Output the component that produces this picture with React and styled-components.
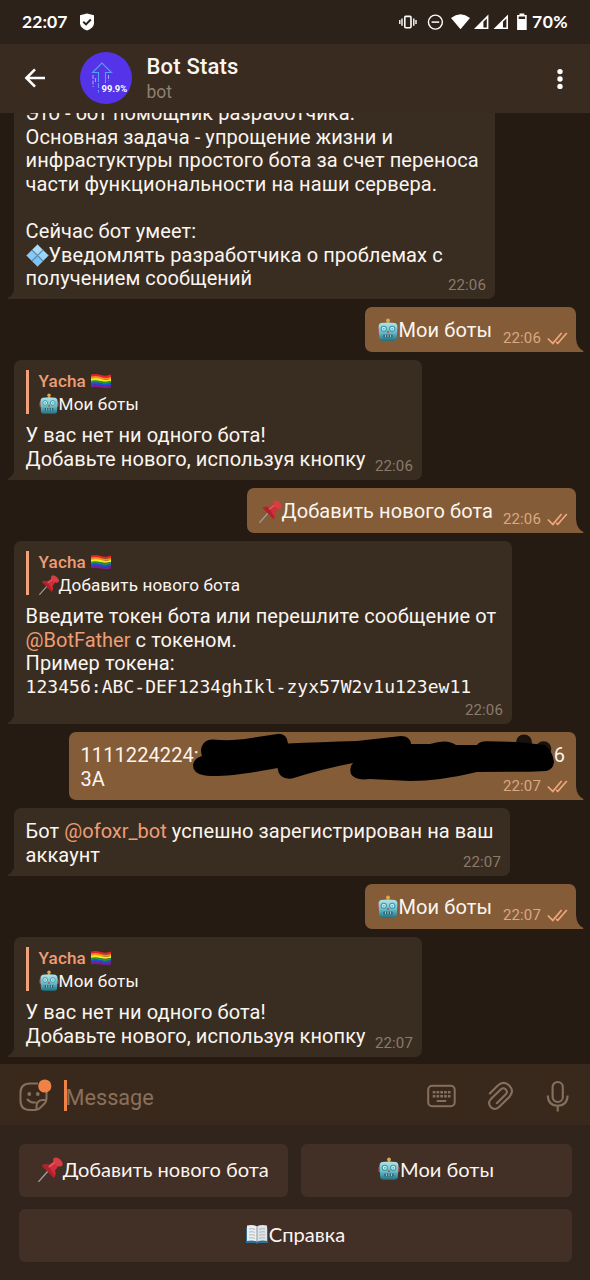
import React from "react";
import styled, { createGlobalStyle, css } from "styled-components";

const color = {
  status: "#2d2219",
  header: "#392b1f",
  chat: "#251b13",
  incoming: "#392d22",
  outgoing: "#845c37",
  composer: "#39291d",
  keyboard: "#31241c",
  key: "#422f25",
  text: "#fbf5f0",
  accent: "#ee9d75",
  muted: "#8b7a6b",
  icon: "#85705d",
  cursor: "#ef8247",
};

const GlobalStyle = createGlobalStyle`
  * { box-sizing: border-box; }
  body { margin: 0; background: ${color.chat}; }
`;

const Screen = styled.div`
  width: 590px;
  height: 1280px;
  display: flex;
  flex-direction: column;
  overflow: hidden;
  color: ${color.text};
  font-family: Roboto, "Liberation Sans", sans-serif;
`;

const StatusBar = styled.div`
  flex: 0 0 44px;
  display: flex;
  align-items: center;
  padding: 0 20px 0 22px;
  background: ${color.status};
  color: #fff;
  font: 700 17.5px/44px Lato, Roboto, sans-serif;
`;

const Clock = styled.span`
  width: 57px;
  letter-spacing: 0.1px;
`;

const StatusIcons = styled.div`
  margin-left: auto;
  display: flex;
  align-items: center;
`;

const Level = styled.span`
  width: 38px;
  margin-left: 4px;
  white-space: nowrap;
  letter-spacing: 0.5px;
`;

const Header = styled.header`
  flex: 0 0 69px;
  display: flex;
  align-items: center;
  padding: 0 0 2px 24px;
  background: ${color.header};
`;

const Avatar = styled.svg`
  width: 52px;
  height: 52px;
  margin-left: 34px;
`;

const Peer = styled.div`
  flex: 1;
  margin: 2px 0 0 14.5px;
`;

const PeerName = styled.div`
  font-size: 22px;
  font-weight: 500;
  line-height: 26px;
  letter-spacing: 0.2px;
`;

const PeerKind = styled.div`
  font-size: 17.5px;
  line-height: 24px;
  color: #8f8074;
`;

const MenuIcon = styled.svg`
  width: 8px;
  height: 24px;
  margin: 2px 26px 0 0;
`;

const Chat = styled.main`
  flex: 1;
  min-height: 0;
  display: flex;
  flex-direction: column;
  justify-content: flex-end;
  align-items: flex-start;
  gap: 8px;
  padding: 0 14px 7px;
  overflow: hidden;
  background: ${color.chat};
`;

const Bubble = styled.article`
  position: relative;
  flex: none;
  width: ${(p) => p.$w}px;
  height: ${(p) => p.$h}px;
  padding: 12px 11px 0 ${(p) => (p.$out ? 11.5 : 11.6)}px;
  border-radius: 7px;
  ${(p) =>
    p.$out
      ? css`
          align-self: flex-end;
          background: ${color.outgoing};
          border-bottom-right-radius: 0;
        `
      : css`
          background: ${color.incoming};
          border-bottom-left-radius: 0;
        `}
`;

const TailShape = styled.svg`
  position: absolute;
  bottom: 0;
  width: 8px;
  height: 14px;
  ${(p) => (p.$out ? "left: calc(100% - 0.5px);" : "right: calc(100% - 0.5px); transform: scaleX(-1);")}
`;

const Meta = styled.div`
  position: absolute;
  right: ${(p) => (p.$out ? 8 : 9)}px;
  bottom: 4px;
  display: flex;
  align-items: center;
  gap: 6px;
  font-size: 15px;
  line-height: 19px;
  letter-spacing: 0.15px;
  color: ${(p) => (p.$out ? "#d9a982" : color.muted)};
`;

const Line = styled.div`
  display: flex;
  align-items: center;
  height: 23.6px;
  font-size: 20px;
  line-height: 23.6px;
  white-space: pre;
  letter-spacing: 0.09px;
`;

const Code = styled.span`
  padding-bottom: 2.5px;
  font-family: "DejaVu Sans Mono", "Liberation Mono", monospace;
  font-size: 18px;
  letter-spacing: 0.03px;
`;

const Mention = styled.span`
  color: ${color.accent};
  letter-spacing: 0;
`;

const Quote = styled.div`
  height: 44px;
  margin: -2px 0 10px;
  padding-left: 10px;
  border-left: 3px solid #f0a27c;
  font-size: 17.1px;
  letter-spacing: 0.12px;
`;

const QuoteName = styled.div`
  display: flex;
  align-items: center;
  gap: 5.5px;
  height: 22px;
  font-weight: 500;
  color: ${color.accent};
`;

const QuoteText = styled.div`
  display: flex;
  align-items: center;
  height: 24px;
`;

const Redaction = styled.svg`
  position: absolute;
  left: 121px;
  top: 0;
  width: 370px;
  height: 52px;
`;

const LineEnd = styled.span`
  margin-left: auto;
`;

const Composer = styled.div`
  flex: 0 0 61px;
  display: flex;
  align-items: center;
  padding: 2px 20px 0 18.5px;
  background: ${color.composer};
`;

const Input = styled.div`
  flex: 1;
  display: flex;
  align-items: center;
  height: 31px;
  margin-left: 12px;
  padding-top: 4px;
  border-left: 3px solid ${color.cursor};
  color: #8b7059;
  font: 400 21.7px/27px Roboto, sans-serif;
  text-indent: -1px;
`;

const Tools = styled.div`
  display: flex;
  align-items: center;
  gap: 29px;
`;

const Keyboard = styled.div`
  flex: 0 0 155px;
  display: grid;
  grid-template-columns: 269.5px 1fr;
  grid-template-rows: 53px 53px;
  gap: 12px 12.5px;
  padding: 19px 18.5px 0;
  background: ${color.keyboard};
`;

const Key = styled.button`
  display: flex;
  align-items: center;
  justify-content: center;
  padding: 0 0 3px;
  border: 0;
  border-radius: 6px;
  background: ${color.key};
  color: ${color.text};
  font: 400 20.1px/24px Lato, Roboto, sans-serif;
  grid-column: ${(p) => (p.$wide ? "1 / -1" : "auto")};
`;

const Glyph = styled.svg`
  flex: none;
  width: ${(p) => p.$w}px;
  height: ${(p) => p.$h}px;
  overflow: visible;
`;

const RobotGlyph = styled(Glyph)`
  margin-bottom: 1px;
`;

function Robot({ size = 22 }) {
  return (
    <RobotGlyph $w={size} $h={size} viewBox="0 0 22 22">
      <defs>
        <linearGradient id="robotFace" x1="0" y1="0" x2="0" y2="1">
          <stop offset="0" stopColor="#b4e4e8" />
          <stop offset="0.55" stopColor="#6bbac6" />
          <stop offset="1" stopColor="#1b7286" />
        </linearGradient>
      </defs>
      <path d="M11 5V1" stroke="#b88138" strokeWidth="1.6" />
      <circle cx="11" cy="1.4" r="1.9" fill="#dfa84a" />
      <rect x="0.4" y="8.6" width="3" height="5.6" rx="1.2" fill="#a5474b" />
      <rect x="18.6" y="8.6" width="3" height="5.6" rx="1.2" fill="#a5474b" />
      <path d="M4 4.1Q11 2.9 18 4.1Q20.6 5 20.4 8L19.8 20Q18.8 21.8 16.4 21.8H5.6Q3.2 21.8 2.2 20L1.6 8Q1.4 5 4 4.1Z" fill="url(#robotFace)" />
      <circle cx="6.8" cy="9.8" r="2.6" fill="#c9f2f2" stroke="#3a98a9" strokeWidth="1.1" />
      <circle cx="15.2" cy="9.8" r="2.6" fill="#c9f2f2" stroke="#3a98a9" strokeWidth="1.1" />
      <circle cx="6.8" cy="9.8" r="0.9" fill="#4aabb9" />
      <circle cx="15.2" cy="9.8" r="0.9" fill="#4aabb9" />
      <path d="M11 11.2L9.7 13.7H12.3Z" fill="#c33d4c" />
      <rect x="6.4" y="15.4" width="9.2" height="3" rx="0.6" fill="#28616e" />
      <path d="M8.4 15.6V18.2M11 15.6V18.2M13.6 15.6V18.2" stroke="#b9dcdf" strokeWidth="0.9" />
    </RobotGlyph>
  );
}

function Pin({ size = 23 }) {
  return (
    <Glyph $w={size} $h={size} viewBox="0 0 23 23">
      <path d="M0.8 22.4L10 12" stroke="#9da0a3" strokeWidth="1.3" strokeLinecap="round" />
      <path d="M3.5 7.8Q6.5 5.8 10 7.2L15.2 3.6L19.3 7.9L15.5 12.6Q17.2 16 14.6 19.2Z" fill="#cf2f3b" />
      <path d="M3.5 7.8Q6 6.2 9.2 7.3L15.2 16.5Q15.4 18 14.6 19.2Z" fill="#b3202d" />
      <ellipse cx="18.3" cy="4.6" rx="5.2" ry="3.2" transform="rotate(42 18.3 4.6)" fill="#dc3b43" />
      <path d="M10.3 9L15 5.4" stroke="#e85c64" strokeWidth="1.2" strokeLinecap="round" />
    </Glyph>
  );
}

function Diamond() {
  return (
    <Glyph $w={23} $h={23} viewBox="0 0 23 23">
      <g stroke="#5a9fdc" strokeWidth="0.7" strokeLinejoin="round">
        <path d="M11.5 0.5L16.8 5.8L11.5 11.1L6.2 5.8Z" fill="#a9dcf7" />
        <path d="M5.8 6.2L11.1 11.5L5.8 16.8L0.5 11.5Z" fill="#88caf3" />
        <path d="M17.2 6.2L22.5 11.5L17.2 16.8L11.9 11.5Z" fill="#9ad6f7" />
        <path d="M11.5 11.9L16.8 17.2L11.5 22.5L6.2 17.2Z" fill="#7ec3ef" />
      </g>
    </Glyph>
  );
}

function Flag() {
  const stripes = ["#e8202c", "#f68b1e", "#f8e71c", "#23963c", "#1c4fd8", "#7c1d8f"];
  return (
    <Glyph $w={20} $h={17} viewBox="0 0 20 17">
      {stripes.map((c, i) => (
        <path
          key={c}
          d={`M0 ${1.4 + i * 2.1}Q5 ${0.2 + i * 2.1} 10 ${1.9 + i * 2.1}T20 ${1.6 + i * 2.1}v2.3Q15 ${5.2 + i * 2.1} 10 ${4.1 + i * 2.1}T0 ${3.7 + i * 2.1}Z`}
          fill={c}
        />
      ))}
    </Glyph>
  );
}

function Book() {
  return (
    <Glyph $w={24} $h={22} viewBox="0 0 24 22">
      <path d="M1 4.5H23V20H13.5L12 21L10.5 20H1Z" fill="#2f6f91" />
      <path d="M2 2.5Q7.5 1.2 12 3.2V18.6Q7.5 17 2 18Z" fill="#eceff1" />
      <path d="M22 2.5Q16.5 1.2 12 3.2V18.6Q16.5 17 22 18Z" fill="#dfe4e8" />
      <path d="M12 3.2V18.6" stroke="#7f8d96" strokeWidth="0.9" />
      <path d="M4 6Q7 5.2 10 6.4M4 9Q7 8.2 10 9.4M4 12Q7 11.2 10 12.4M4 15Q7 14.2 10 15.4M14 6.4Q17 5.2 20 6M14 9.4Q17 8.2 20 9M14 12.4Q17 11.2 20 12M14 15.4Q17 14.2 20 15" stroke="#a8b2b9" strokeWidth="0.9" fill="none" />
    </Glyph>
  );
}

function Checks() {
  return (
    <Glyph $w={21} $h={13} viewBox="0 0 21 13" fill="none" stroke="#f0a67d" strokeWidth="1.7">
      <path d="M0.8 6.5L5.8 11.4L14.6 1" />
      <path d="M9.2 10L10.8 11.4L19.8 1" />
    </Glyph>
  );
}

function Message({ out, w, h, time, children }) {
  return (
    <Bubble $out={out} $w={w} $h={h}>
      <TailShape $out={out} viewBox="0 0 8 14">
        <path d="M0 0Q0.6 10 7.2 12.8Q8 14 6.5 14H0Z" fill={out ? color.outgoing : color.incoming} />
      </TailShape>
      {children}
      <Meta $out={out}>
        {time}
        {out && <Checks />}
      </Meta>
    </Bubble>
  );
}

function Reply({ icon, children }) {
  return (
    <Quote>
      <QuoteName>
        Yacha <Flag />
      </QuoteName>
      <QuoteText>
        {icon}
        {children}
      </QuoteText>
    </Quote>
  );
}

function NoBots({ time }) {
  return (
    <Message w={408} h={120} time={time}>
      <Reply icon={<Robot size={20} />}>Мои боты</Reply>
      <Line>У вас нет ни одного бота!</Line>
      <Line>Добавьте нового, используя кнопку</Line>
    </Message>
  );
}

function StatusGlyphs() {
  return (
    <Glyph $w={130} $h={20} viewBox="0 0 130 20" fill="none" stroke="#fff">
      <rect x="6.8" y="4.4" width="6.2" height="11.4" rx="1" strokeWidth="1.6" />
      <path d="M4 6.4V13.8M1.8 8V12M15.8 6.4V13.8M18 8V12" strokeWidth="1.4" />
      <circle cx="37.4" cy="10.1" r="7" strokeWidth="1.4" />
      <path d="M33.6 10.1H41.2" strokeWidth="1.5" />
      <g fill="#fff" stroke="none">
        <path d="M53 5.9Q62.5 -1.2 72 5.9L62.5 17.3Z" />
        <path d="M90.4 2.5V17H76ZM88.8 6.4L85.4 9.8V15.5H88.8Z" fillRule="evenodd" />
        <path d="M110 2.5V17H95.5ZM108.4 6.4L105 9.8V15.5H108.4Z" fillRule="evenodd" />
        <path d="M121.5 1.4H126.3V3H128.7V18H119.1V3H121.5ZM120.7 4.6V7H127.1V4.6Z" fillRule="evenodd" />
      </g>
    </Glyph>
  );
}

export default function App() {
  return (
    <Screen>
      <GlobalStyle />
      <StatusBar>
        <Clock>22:07</Clock>
        <Glyph $w={16} $h={18} viewBox="0 0 16 18">
          <path d="M8 0.5L15 2.2V10.5Q14.6 15 8 17.5Q1.4 15 1 10.5V2.2Z" fill="#fff" />
          <path d="M4.3 8.8L7 11.4L11.8 6.5" fill="none" stroke={color.status} strokeWidth="1.9" />
        </Glyph>
        <StatusIcons>
          <StatusGlyphs />
          <Level>70%</Level>
        </StatusIcons>
      </StatusBar>

      <Header>
        <Glyph $w={22} $h={20} viewBox="0 0 22 20" fill="none" stroke="#fff" strokeWidth="2.6">
          <path d="M21 10H2.8M11 1.4L2.4 10L11 18.6" />
        </Glyph>
        <Avatar viewBox="0 0 52 52">
          <circle cx="26" cy="26" r="26" fill="#5433e8" />
          <g fill="none" stroke="#599df4" strokeWidth="1.1">
            <path d="M18.5 30V20.5H12.5L22 11L31.5 20.5H25.5V30" />
            <path d="M18.5 31V36M18.5 38V40.5" />
            <path d="M13 23V35M15.5 26V31M28.5 23V29M25.5 30V31" stroke="#a89bff" strokeDasharray="4 1.5" />
          </g>
          <text x="21.6" y="39.8" fill="#fff" fontSize="9.4" fontWeight="700" textLength="25.5" fontFamily="Roboto, sans-serif">
            99.9%
          </text>
        </Avatar>
        <Peer>
          <PeerName>Bot Stats</PeerName>
          <PeerKind>bot</PeerKind>
        </Peer>
        <MenuIcon viewBox="0 0 8 24" fill="#fff">
          <circle cx="4" cy="4.6" r="2.7" />
          <circle cx="4" cy="12" r="2.7" />
          <circle cx="4" cy="19.4" r="2.7" />
        </MenuIcon>
      </Header>

      <Chat>
        <Message w={481} h={209} time="22:06">
          <Line>Это - бот помощник разработчика.</Line>
          <Line>Основная задача - упрощение жизни и</Line>
          <Line>инфрастуктуры простого бота за счет переноса</Line>
          <Line>части функциональности на наши сервера.</Line>
          <Line />
          <Line>Сейчас бот умеет:</Line>
          <Line>
            <Diamond />
            Уведомлять разработчика о проблемах с
          </Line>
          <Line>получением сообщений</Line>
        </Message>
        <Message out w={211} h={45} time="22:06">
          <Line>
            <Robot />
            Мои боты
          </Line>
        </Message>
        <NoBots time="22:06" />
        <Message out w={329} h={45} time="22:06">
          <Line>
            <Pin />
            Добавить нового бота
          </Line>
        </Message>
        <Message w={498} h={183} time="22:06">
          <Reply icon={<Pin size={20} />}>Добавить нового бота</Reply>
          <Line>Введите токен бота или перешлите сообщение от</Line>
          <Line>
            <Mention>@BotFather</Mention> с токеном.
          </Line>
          <Line>Пример токена:</Line>
          <Line>
            <Code>123456:ABC-DEF1234ghIkl-zyx57W2v1u123ew11</Code>
          </Line>
        </Message>
        <Message out w={507} h={68} time="22:07">
          <Line>
            1111224224:<LineEnd>6</LineEnd>
          </Line>
          <Line>3А</Line>
          <Redaction viewBox="190 732 370 52">
            <circle cx="524" cy="742.5" r="8" fill="#17120d" />
            <circle cx="543.5" cy="749" r="7.8" fill="#17120d" />
            <path
              d="M202 746Q205 739 213 739.5Q230 741 245 739L279 733.8Q287 734 288 743.5Q320 742 357 741L401 736Q410 736 411 744L430 744Q447 738.5 456 745L477 745Q480 741 487 741.3L517 742L545 745Q553 752 554 762Q553 770 546 771L530 771.7L477 772Q440 781 410 781L370 779Q355 781 351 774Q349 767 353 763Q322 769 292 778.5Q279 780 277.5 768Q245 774 233 775Q210 777 203 775Q193 773 193 765Q194 758 202 756Q200 750 202 746Z"
              fill="#000"
            />
          </Redaction>
        </Message>
        <Message w={496} h={68} time="22:07">
          <Line>
            Бот <Mention>@ofoxr_bot</Mention> успешно зарегистрирован на ваш
          </Line>
          <Line>аккаунт</Line>
        </Message>
        <Message out w={211} h={45} time="22:07">
          <Line>
            <Robot />
            Мои боты
          </Line>
        </Message>
        <NoBots time="22:07" />
      </Chat>

      <Composer>
        <Glyph $w={33} $h={34} viewBox="0 0 33 34" fill="none" stroke={color.icon} strokeWidth="2">
          <path d="M19 4.5H11Q1.5 4.5 1.5 14V21.5Q1.5 31 11 31H16.5Q19 31 21.5 28.5L25.5 24.5Q27.5 22.5 27.5 19.5V13" />
          <path d="M17.5 30.5V27.5Q17.5 21 24 21H27.5" />
          <path d="M8.5 20.5Q11.5 24 16.5 23.5" strokeLinecap="round" />
          <circle cx="10.3" cy="15" r="1.9" fill={color.icon} stroke="none" />
          <circle cx="18.8" cy="15" r="1.9" fill={color.icon} stroke="none" />
          <circle cx="25.8" cy="7" r="6.6" fill={color.cursor} stroke="none" />
        </Glyph>
        <Input>Message</Input>
        <Tools>
          <Glyph $w={30} $h={24} viewBox="0 0 30 24" fill="none" stroke={color.icon} strokeWidth="2">
            <rect x="1.2" y="1.8" width="26.5" height="20.5" rx="4" />
            <path d="M5.7 8.2H23.5M5.7 12.2H23.5" strokeWidth="2.6" strokeDasharray="2.7 1.1" />
            <path d="M9.7 17H19.2" strokeWidth="2" />
          </Glyph>
          <Glyph $w={30} $h={30} viewBox="0 0 30 30" fill="none" stroke={color.icon} strokeWidth="2.1" strokeLinecap="round">
            <path d="M3.8 12.5L11.8 4.6Q17.5 -0.7 23.2 4.4Q28.6 9.8 23.5 15.7L12.8 26.2Q8.8 29.8 4.9 26.2Q1.2 22 4.9 18.1L14.9 8.2Q17.4 6.2 19.8 8.4Q22 11 19.8 13.3L10.8 22.2" />
          </Glyph>
          <Glyph $w={25} $h={32} viewBox="0 0 25 32" fill="none" stroke={color.icon} strokeWidth="2.1">
            <rect x="7.6" y="2" width="10.2" height="20" rx="5.1" />
            <path d="M2.8 15.5Q3 25.5 12.7 25.8Q22.4 25.5 22.6 15.5M12.7 26V31.5" />
          </Glyph>
        </Tools>
      </Composer>

      <Keyboard>
        <Key>
          <Pin size={25} />
          Добавить нового бота
        </Key>
        <Key>
          <Robot />
          Мои боты
        </Key>
        <Key $wide>
          <Book />
          Справка
        </Key>
      </Keyboard>
    </Screen>
  );
}
